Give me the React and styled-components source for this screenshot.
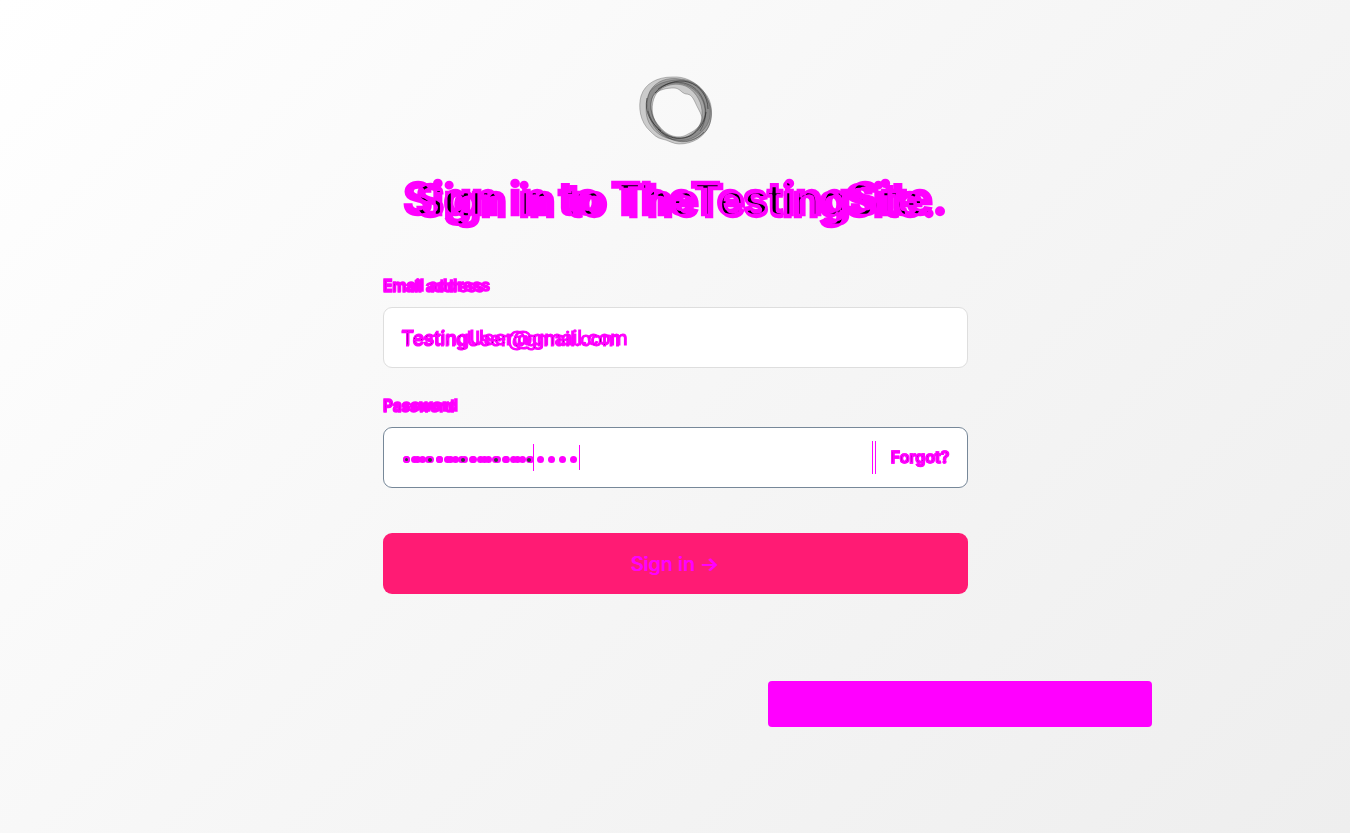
import React from "react";
import styled, { createGlobalStyle, css } from "styled-components";

const MARK = "#ff00ff";

const GlobalStyle = createGlobalStyle`
  * { box-sizing: border-box; }
  html, body { margin: 0; padding: 0; }
  body { font-family: Inter, "Liberation Sans", sans-serif; color: #1a1a1a; }
`;

const Page = styled.main`
  width: 100%;
  height: 833px;
  overflow: hidden;
  display: flex;
  flex-direction: column;
  align-items: center;
  padding-top: 74px;
  background: linear-gradient(135deg, #ffffff 0%, #f6f6f6 50%, #eeeeee 100%);
`;

const Logo = styled.svg`
  display: block;
  width: 76px;
  height: 72px;
  margin-left: 2px;
`;

/* Two renderings of one string share a cell; identical pixels cancel to dark. */
const Stack = styled.span`
  display: grid;
  justify-items: ${(p) => p.$align || "start"};
  isolation: isolate;
  white-space: pre;
`;

const layer = css`
  grid-area: 1 / 1;
  position: relative;
  color: ${MARK};
  font-family: ${(p) => p.$font || "Inter"}, sans-serif;
  font-size: ${(p) => p.$size}px;
  font-weight: ${(p) => p.$weight || 400};
  letter-spacing: ${(p) => p.$track || 0}px;
  word-spacing: ${(p) => p.$words || 0}px;
  line-height: ${(p) => p.$line}px;
  margin-top: ${(p) => p.$drop || 0}px;
`;

const Layer = styled.span`
  ${layer}
  mix-blend-mode: ${(p) => (p.$solid ? "normal" : "difference")};
`;

const Outline = styled.span`
  ${layer}
  -webkit-text-fill-color: transparent;
  -webkit-text-stroke: ${(p) => p.$stroke}px ${MARK};
  &::before { content: "${(p) => p.$text}"; }
`;

const Title = styled.h1`
  margin: 25px 0 0;
  height: 60px;
  width: 585px;
`;

const Form = styled.form`
  width: 585px;
  margin: 46px 0 0;
  display: flex;
  flex-direction: column;
`;

const Label = styled.label`
  height: 20px;
  margin: ${(p) => p.$top || 0}px 0 10px;
  padding-left: 0.5px;
`;

const Field = styled.div`
  height: 61px;
  display: flex;
  align-items: center;
  padding: 0 17px 0 18px;
  border: 1px solid ${(p) => (p.$focus ? "#778899" : "#dedede")};
  border-radius: 9px;
  background: #fff;
`;

const Dots = styled.span`
  grid-area: 1 / 1;
  align-self: center;
  display: flex;
  gap: ${(p) => p.$gap}px;
  padding: 4px 0 0 ${(p) => p.$inset}px;
`;

const Dot = styled.i`
  width: ${(p) => p.$size}px;
  height: ${(p) => p.$size}px;
  border-radius: 50%;
  background: ${(p) => p.$tone};
`;

const Caret = styled.span`
  grid-area: 1 / 1;
  align-self: center;
  width: 1px;
  height: ${(p) => p.$h}px;
  margin-left: ${(p) => p.$x}px;
  background: ${MARK};
`;

const Forgot = styled.a`
  display: flex;
  align-items: center;
  height: 33px;
  padding: 0 0 0 15px;
  border-left: 1px solid ${MARK};
`;

const Divider = styled.span`
  width: 3px;
  height: 33px;
  margin-left: auto;
  border-left: 1px solid ${MARK};
`;

const Submit = styled.button`
  margin: 45px 0 0;
  height: 61px;
  border: 0;
  border-radius: 9px;
  background: #ff1b74;
  display: flex;
  justify-content: center;
  align-items: center;
`;

const Notice = styled.aside`
  width: 384px;
  height: 46px;
  margin: 87px 0 0 570px;
  border-radius: 4px;
  background: ${MARK};
`;

function Double({ text, a, b, stroke = 0, align, solid }) {
  return (
    <Stack $align={align}>
      <Layer {...a} $solid={solid}>{text}</Layer>
      <Layer {...b} $solid={solid} aria-hidden="true">{text}</Layer>
      {stroke > 0 && <Outline {...a} $stroke={stroke} $text={text} />}
      {stroke > 0 && <Outline {...b} $stroke={stroke} $text={text} />}
    </Stack>
  );
}

function DotRow({ size, gap, inset, count = 16, tone = MARK }) {
  return (
    <Dots $gap={gap} $inset={inset}>
      {Array.from({ length: count }, (_, i) => <Dot key={i} $size={size} $tone={tone} />)}
    </Dots>
  );
}

function RingLogo() {
  return (
    <Logo viewBox="0 0 76 72" aria-hidden="true">
      <g fillRule="evenodd" stroke="#333" strokeWidth=".6" strokeOpacity=".5">
        <path fill="#555" fillOpacity=".28" d="M3 22C7 9 20 3 34 3c13-1 24 5 32 15 9 9 9 24 5 34-5 11-16 18-30 18-6 0-11-4-17-5-5-1-8-4-12-8C2 48 0 33 3 22ZM15 22c-5 10-1 23 7 31 7 9 19 13 28 7 9-4 15-11 14-17-2-6-5-10-7-15-2-4-4-8-9-8-5-1-6-6-12-6-6 0-16 1-21 8Z" />
        <path fill="#444" fillOpacity=".3" d="M12 17C18 7 29 3 42 5c13 1 23 8 27 19 6 10 6 24-1 33-8 9-21 12-31 9-12-2-21-10-25-22-3-9-4-18 0-27ZM17 22c-4 8-4 20 2 28 6 10 17 16 27 14 11-2 18-13 18-23 1-12-6-22-13-27-10-7-28-4-34 8Z" />
        <path fill="#333" fillOpacity=".18" d="M10 22C13 12 25 7 38 6c12-1 24 5 30 16 5 9 6 20 1 29-7 11-18 17-30 15-11-1-20-5-26-14-6-8-6-20-3-30ZM14 24c-3 9 0 22 7 30 7 9 20 12 29 8 9-5 18-15 17-26-1-12-9-21-19-25-12-5-29 0-34 13Z" />
      </g>
      <g fill="none" stroke="#222" strokeOpacity=".6">
        <path d="M17 19C26 9 40 5 50 8c12 3 20 15 20 27M20 55c9 9 21 12 32 7 9-5 15-14 16-24M9 24c-3 14 4 25 14 33" />
        <path strokeWidth=".7" d="M20 15c14-11 33-8 42 5 8 12 7 26 0 37M10 37c4 14 14 24 25 29 12 4 23 1 31-8" />
      </g>
    </Logo>
  );
}

export default function App() {
  return (
    <>
      <GlobalStyle />
      <Page>
        <RingLogo />
        <Title>
          <Double
            text="Sign in to TheTestingSite."
            align="center"
            stroke={2.4}
            a={{ $size: 45, $weight: 700, $track: -0.55, $line: 56, $drop: 0 }}
            b={{ $size: 45, $weight: 600, $track: -1.5, $words: 2.2, $line: 56, $drop: 2 }}
          />
        </Title>
        <Form onSubmit={(e) => e.preventDefault()}>
          <Label>
            <Double
              text="Email address"
              stroke={1.5}
              a={{ $size: 15.5, $weight: 600, $line: 18, $track: 0.2 }}
              b={{ $size: 15.5, $weight: 500, $track: -0.2, $line: 18, $drop: 0.5 }}
            />
          </Label>
          <Field>
            <Double
              text="TestingUser@gmail.com"
              stroke={1.1}
              a={{ $size: 20, $line: 28, $track: -0.2, $drop: 1.5 }}
              b={{ $font: "Roboto", $size: 20, $line: 28, $drop: 3 }}
            />
          </Field>
          <Label $top={29}>
            <Double
              text="Password"
              stroke={1.5}
              a={{ $size: 15.5, $weight: 600, $line: 18, $track: 0.2 }}
              b={{ $size: 15.5, $weight: 500, $track: -0.2, $line: 18, $drop: 0.5 }}
            />
          </Label>
          <Field $focus>
            <Stack>
              <DotRow size={7} gap={4.2} inset={1} />
              <DotRow size={7} gap={1.3} inset={1} />
              <DotRow size={3} gap={0} inset={3} count={1} tone="#343f3c" />
              <DotRow size={4} gap={29} inset={26} count={4} tone="#343f3c" />
              <Caret $x={131} $h={27} />
              <Caret $x={177} $h={25} />
            </Stack>
            <Divider />
            <Forgot>
              <Double
                text="Forgot?"
                stroke={1.4}
                a={{ $size: 16, $weight: 600, $line: 22 }}
                b={{ $size: 15.5, $weight: 500, $track: 0.3, $line: 22, $drop: 1 }}
              />
            </Forgot>
          </Field>
          <Submit>
            <Double
              text="Sign in →"
              align="center"
              solid
              a={{ $size: 19.5, $weight: 500, $line: 26 }}
              b={{ $size: 20, $weight: 500, $line: 26 }}
            />
          </Submit>
        </Form>
        <Notice />
      </Page>
    </>
  );
}
